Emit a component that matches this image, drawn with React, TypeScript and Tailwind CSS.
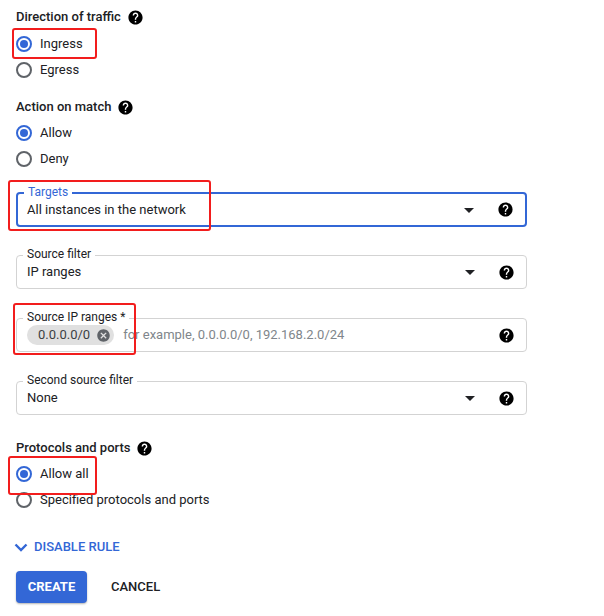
import { ReactNode } from 'react';

const HelpIcon = ({ className = '' }: { className?: string }) => (
  <svg viewBox="0 0 24 24" className={`h-[17px] w-[17px] shrink-0 ${className}`} fill="#000">
    <path d="M12 2C6.48 2 2 6.48 2 12s4.48 10 10 10 10-4.48 10-10S17.52 2 12 2zm1 17h-2v-2h2v2zm2.07-7.75l-.9.92C13.45 12.9 13 13.5 13 15h-2v-.5c0-1.1.45-2.1 1.17-2.83l1.24-1.26c.37-.36.59-.86.59-1.41 0-1.1-.9-2-2-2s-2 .9-2 2H8c0-2.21 1.79-4 4-4s4 1.79 4 4c0 .88-.36 1.68-.93 2.25z" />
  </svg>
);

const Arrow = () => (
  <svg viewBox="0 0 24 24" className="h-[24px] w-[24px] shrink-0" fill="#202124">
    <path d="M7 10l5 5 5-5z" />
  </svg>
);

const Title = ({ children }: { children: ReactNode }) => (
  <div className="flex h-[20px] items-center gap-[6px] text-[13px] font-medium text-[#202124]">
    {children}
    <HelpIcon />
  </div>
);

const Radio = ({ label, checked }: { label: string; checked?: boolean }) => (
  <label className="flex h-[26px] items-center gap-[8px] text-[13px] text-[#202124]">
    <span
      className={`flex h-[16px] w-[16px] items-center justify-center rounded-full border-2 ${
        checked ? 'border-[#3367d6]' : 'border-[#5f6368]'
      }`}
    >
      {checked && <span className="h-[8px] w-[8px] rounded-full bg-[#3367d6]" />}
    </span>
    {label}
  </label>
);

const Field = ({
  label,
  children,
  focused,
  dropdown = true,
  className = '',
}: {
  label: string;
  children: ReactNode;
  focused?: boolean;
  dropdown?: boolean;
  className?: string;
}) => (
  <div
    className={`relative flex w-[511px] items-center rounded-[4px] pr-[11px] ${
      focused ? 'h-[35px] border-2 border-[#3367d6] pl-[9px]' : 'h-[34px] border border-[#d3d3d3] pl-[10px]'
    } ${className}`}
  >
    <span
      className={`absolute -top-[9px] left-[6px] bg-white px-[4px] text-[12px] leading-[14px] ${
        focused ? 'text-[#3367d6]' : 'text-[#202124]'
      }`}
    >
      {label}
    </span>
    <div className="flex min-w-0 flex-1 items-center text-[13px] text-[#202124]">{children}</div>
    {dropdown && (
      <div className="mr-[16px]">
        <Arrow />
      </div>
    )}
    <HelpIcon />
  </div>
);

const Mark = ({ className }: { className: string }) => (
  <div className={`pointer-events-none absolute rounded-[3px] border-2 border-[#f21d1d] ${className}`} />
);

export default function App() {
  return (
    <div
      className="relative min-h-[616px] w-[604px] bg-white px-[16px] pt-[7px]"
      style={{ fontFamily: 'Roboto, "Liberation Sans", sans-serif' }}
    >
      <Title>Direction of traffic</Title>
      <div className="mt-[4px] flex flex-col">
        <Radio label="Ingress" checked />
        <Radio label="Egress" />
      </div>

      <div className="mt-[14px]">
        <Title>Action on match</Title>
      </div>
      <div className="mt-[3px] flex flex-col">
        <Radio label="Allow" checked />
        <Radio label="Deny" />
      </div>

      <Field label="Targets" focused className="mt-[20px]">
        All instances in the network
      </Field>
      <Field label="Source filter" className="mt-[28px]">
        IP ranges
      </Field>
      <Field label="Source IP ranges *" dropdown={false} className="mt-[29px]">
        <span className="flex h-[20px] items-center gap-[6px] rounded-full bg-[#e0e0e0] pl-[11px] pr-[3px] text-[#3c4043]">
          0.0.0.0/0
          <svg viewBox="0 0 24 24" className="h-[15px] w-[15px]" fill="#5f6368">
            <path d="M12 2C6.47 2 2 6.47 2 12s4.47 10 10 10 10-4.47 10-10S17.53 2 12 2zm5 13.59L15.59 17 12 13.41 8.41 17 7 15.59 10.59 12 7 8.41 8.41 7 12 10.59 15.59 7 17 8.41 13.41 12 17 15.59z" />
          </svg>
        </span>
        <span className="ml-[9px] text-[#80868b]">for example, 0.0.0.0/0, 192.168.2.0/24</span>
      </Field>
      <Field label="Second source filter" className="mt-[29px]">
        None
      </Field>

      <div className="mt-[23px]">
        <Title>Protocols and ports</Title>
      </div>
      <div className="mt-[3px] flex flex-col">
        <Radio label="Allow all" checked />
        <Radio label="Specified protocols and ports" />
      </div>

      <button className="mt-[24px] flex h-[20px] items-center gap-[6px] text-[13px] font-medium uppercase text-[#3367d6]">
        <svg viewBox="0 0 14 9" className="-ml-[2px] h-[9px] w-[14px]" fill="none" stroke="#3367d6" strokeWidth="2.4">
          <path d="M1.5 1.5l5.5 5.5 5.5-5.5" />
        </svg>
        Disable rule
      </button>

      <div className="mt-[14px] flex items-center gap-[24px]">
        <button className="h-[32px] w-[71px] rounded-[4px] bg-[#3367d6] text-[13px] font-bold uppercase text-white shadow-[0_1px_2px_rgba(0,0,0,0.3)]">
          Create
        </button>
        <button className="text-[13px] font-medium uppercase text-[#202124]">Cancel</button>
      </div>

      <Mark className="left-[12px] top-[28px] h-[31px] w-[85px]" />
      <Mark className="left-[8px] top-[180px] h-[51px] w-[203px]" />
      <Mark className="left-[13px] top-[303px] h-[52px] w-[123px]" />
      <Mark className="left-[8px] top-[456px] h-[39px] w-[89px]" />
    </div>
  );
}
